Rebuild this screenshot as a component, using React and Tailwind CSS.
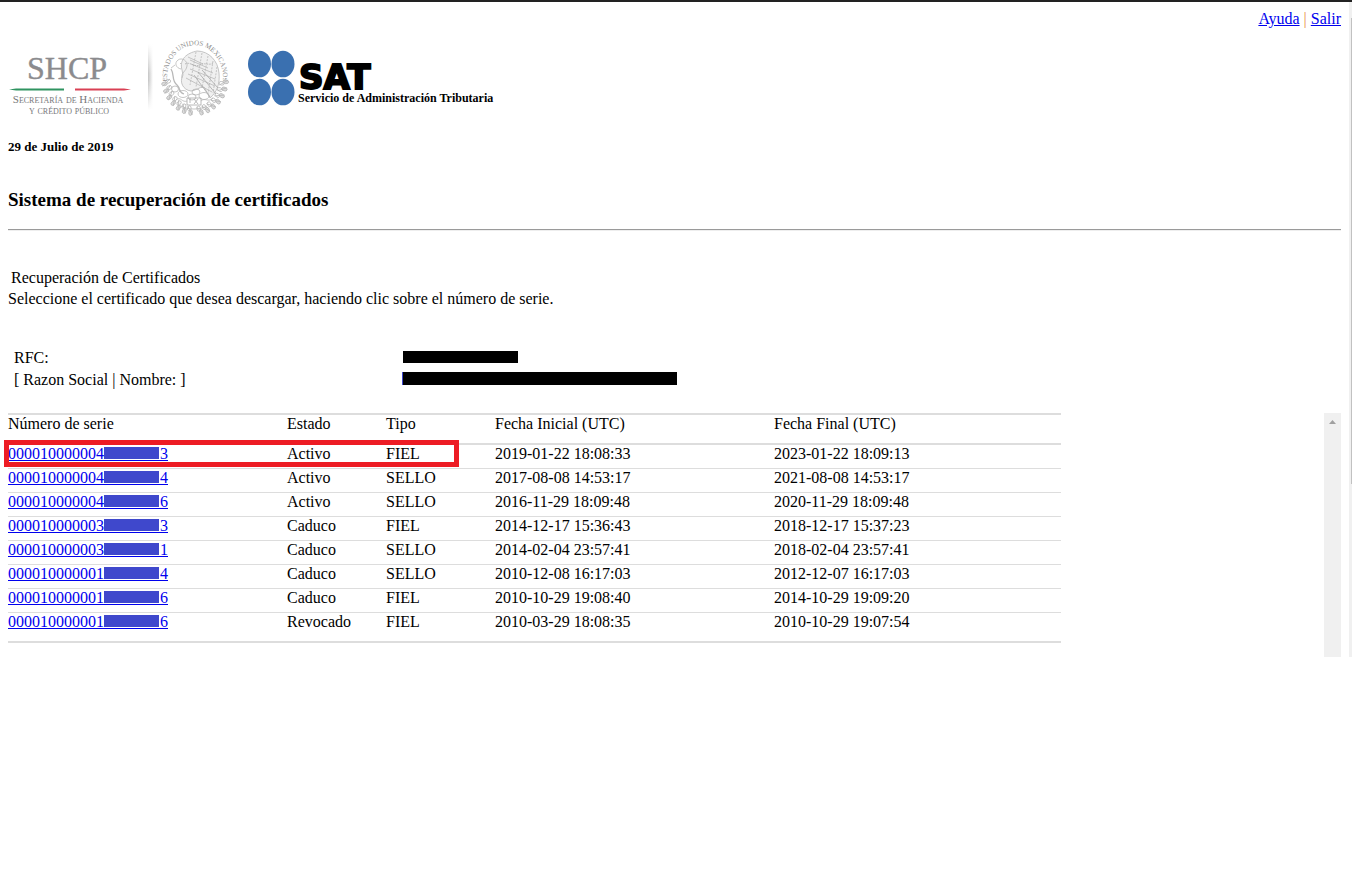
import clsx from 'clsx';

const certificates = [
  { start: '000010000004', end: '3', status: 'Activo', type: 'FIEL', from: '2019-01-22 18:08:33', to: '2023-01-22 18:09:13', marked: true },
  { start: '000010000004', end: '4', status: 'Activo', type: 'SELLO', from: '2017-08-08 14:53:17', to: '2021-08-08 14:53:17' },
  { start: '000010000004', end: '6', status: 'Activo', type: 'SELLO', from: '2016-11-29 18:09:48', to: '2020-11-29 18:09:48' },
  { start: '000010000003', end: '3', status: 'Caduco', type: 'FIEL', from: '2014-12-17 15:36:43', to: '2018-12-17 15:37:23' },
  { start: '000010000003', end: '1', status: 'Caduco', type: 'SELLO', from: '2014-02-04 23:57:41', to: '2018-02-04 23:57:41' },
  { start: '000010000001', end: '4', status: 'Caduco', type: 'SELLO', from: '2010-12-08 16:17:03', to: '2012-12-07 16:17:03' },
  { start: '000010000001', end: '6', status: 'Caduco', type: 'FIEL', from: '2010-10-29 19:08:40', to: '2014-10-29 19:09:20' },
  { start: '000010000001', end: '6', status: 'Revocado', type: 'FIEL', from: '2010-03-29 18:08:35', to: '2010-10-29 19:07:54' },
];

const columns = ['Número de serie', 'Estado', 'Tipo', 'Fecha Inicial (UTC)', 'Fecha Final (UTC)'];

// Leaves of the wreath, in degrees round the lower half of the seal
const leaves = [8, 20, 32, 44, 56, 68, 80, 100, 112, 124, 136, 148, 160, 172];

// Blank space under the hidden digits, keeps the underline unbroken
const hiddenDigits = '\u00a0'.repeat(14);

function NationalSeal() {
  return (
    <g transform="translate(187 42)" fill="none" stroke="#b8b8b8" strokeWidth="0.8">
      <path id="seal-ring" d="M-28 4 V0 A28 33 0 0 1 28 0 V4" stroke="none" />
      <text fill="#8c8c8c" stroke="none" className="font-['Liberation_Serif'] text-[7px]">
        <textPath href="#seal-ring" startOffset="50%" textAnchor="middle">ESTADOS UNIDOS MEXICANOS</textPath>
      </text>
      {leaves.map((deg) => {
        const a = (deg * Math.PI) / 180;
        const x = 29 * Math.cos(a);
        const y = 33 * Math.sin(a);
        return (
          <g key={deg} transform={`translate(${x} ${y}) rotate(${deg})`}>
            <ellipse cx="-2" cy="1" rx="2.6" ry="1.8" />
            <ellipse cx="2" cy="-1" rx="2.8" ry="1.8" fill="#dcdcdc" />
            <path d="M-4 3 L4 -3" />
          </g>
        );
      })}
      {/* Eagle: back, head and wing */}
      <path d="M-13 -8 C-16 -19 -8 -25 2 -27 C14 -27 23 -17 24 -5 C25 6 22 14 15 20 L9 9 C4 9 0 13 -4 13 C-12 12 -16 4 -12 -3 Z" fill="#f0f0f0" />
      <path d="M-14 -9 C-19 -10 -21 -15 -17 -18 C-13 -21 -7 -17 -8 -12 C-9 -6 -14 -6 -13 0" />
      <path d="M-20 -13 L-24 -10 M-15 -15 L-14 -14" />
      <path d="M-24 -9 C-20 -3 -24 2 -18 7 C-14 11 -17 14 -11 16" strokeWidth="1.3" />
      <path d="M-7 -21 L8 -14 M-5 -18 L13 -10 M-4 -14 L18 -5 M-5 -9 L20 1 M-7 -4 L20 8 M-9 0 L17 14" />
      <path d="M1 -26 L-5 7 M7 -25 L1 9 M13 -22 L7 10 M18 -17 L13 16 M22 -11 L18 15" strokeDasharray="2 1.2" />
      <path d="M3 -6 L21 16 M-1 -3 L15 19 M7 -8 L23 10" stroke="#a8a8a8" />
      <path d="M-10 -14 C-5 -17 -1 -10 5 -13 C9 -16 15 -12 18 -15" strokeDasharray="1.5 1" stroke="#a8a8a8" />
      {/* Nopal, rock and water */}
      <ellipse cx="-12" cy="16" rx="5" ry="3.5" />
      <ellipse cx="-20" cy="11" rx="3.5" ry="3" />
      <ellipse cx="9" cy="18" rx="5" ry="3.5" />
      <ellipse cx="1" cy="14" rx="4" ry="3" />
      <ellipse cx="-3" cy="19" rx="4" ry="3" />
      <path d="M-8 20 H6 V27 H-8 Z M-5 20 V25 M-1 21 L3 26 M3 21 L-1 26" stroke="#a8a8a8" />
      <path d="M-19 22 C-14 18 -13 25 -8 23 M6 23 C10 19 13 25 18 20 M-14 28 C-7 32 5 32 12 28" />
    </g>
  );
}

function ShcpLogo() {
  return (
    <svg width="224" height="86" viewBox="0 0 224 86" role="img" aria-label="SHCP">
      <defs>
        <linearGradient id="divider" x1="0" x2="1" y1="0" y2="0">
          <stop offset="0" stopColor="#c4c4c4" />
          <stop offset="1" stopColor="#fff" />
        </linearGradient>
        <linearGradient id="divider-fade" x1="0" x2="0" y1="0" y2="1">
          <stop offset="0" stopColor="#fff" />
          <stop offset="0.45" stopColor="#fff" stopOpacity="0" />
          <stop offset="0.55" stopColor="#fff" stopOpacity="0" />
          <stop offset="1" stopColor="#fff" />
        </linearGradient>
      </defs>
      <text x="59" y="43" textAnchor="middle" fill="#8b8b8e" stroke="#8b8b8e" strokeWidth="0.4" className="font-['Liberation_Serif'] text-[32px]">SHCP</text>
      <path d="M1 53.5 L8 52.5 H56 V54.5 H8 Z" fill="#2f9461" />
      <path d="M67 52.5 H116 L123 53.5 L116 54.5 H67 Z" fill="#d94054" />
      <g fill="#77777a" textAnchor="middle" className="font-['Liberation_Serif'] text-[11px] [font-variant-caps:small-caps]">
        <text x="60" y="67">Secretaría de Hacienda</text>
        <text x="61" y="78">y crédito público</text>
      </g>
      <rect x="140" y="8" width="5" height="66" fill="url(#divider)" />
      <rect x="140" y="8" width="5" height="66" fill="url(#divider-fade)" />
      <NationalSeal />
    </svg>
  );
}

function SatLogo() {
  return (
    <svg width="250" height="86" viewBox="0 0 250 86" role="img" aria-label="SAT">
      <g fill="#3a70b0">
        <ellipse cx="11.5" cy="28" rx="11.5" ry="13.3" />
        <ellipse cx="35" cy="28" rx="11.5" ry="13.3" />
        <ellipse cx="11.5" cy="56" rx="11.5" ry="13.3" />
        <ellipse cx="35" cy="56" rx="11.5" ry="13.3" />
      </g>
      <text x="51" y="53" stroke="#000" strokeWidth="2" className="font-['DejaVu_Sans'] text-[34px] font-bold">SAT</text>
      <text x="50" y="66" className="font-['Liberation_Serif'] text-[12px] font-bold">Servicio de Administración Tributaria</text>
    </svg>
  );
}

function SerialLink({ cert }) {
  return (
    <a href="#descargar" className="relative text-[#0000ee] underline">
      {cert.start}{hiddenDigits}{cert.end}
      <span className="absolute left-24 top-0.5 h-3 w-[55px] bg-[#3f48cc]" />
    </a>
  );
}

function CertificatesTable() {
  return (
    <table className="w-4/5 table-fixed border-collapse text-left">
      <colgroup>
        <col className="w-[279px]" />
        <col className="w-[99px]" />
        <col className="w-[109px]" />
        <col className="w-[279px]" />
        <col />
      </colgroup>
      <thead>
        <tr className="h-[30px] border-y-2 border-[#dddddd] align-top">
          {columns.map((name) => (
            <th key={name} scope="col" className="font-normal leading-[18px]">{name}</th>
          ))}
        </tr>
      </thead>
      <tbody>
        {certificates.map((cert, i) => (
          <tr
            key={cert.from}
            className={clsx(
              'border-[#dddddd] align-top leading-[18px]',
              i === certificates.length - 1 ? 'h-[30px] border-b-2' : 'h-6 border-b'
            )}
          >
            <td className="relative">
              <SerialLink cert={cert} />
              {cert.marked && (
                <div className="pointer-events-none absolute -left-1 -top-[5px] h-[27px] w-[455px] border-5 border-[#ed1c24]" />
              )}
            </td>
            <td>{cert.status}</td>
            <td>{cert.type}</td>
            <td>{cert.from}</td>
            <td>{cert.to}</td>
          </tr>
        ))}
      </tbody>
    </table>
  );
}

function App() {
  return (
    <div className="flex border-t-2 border-[#222] bg-white font-['Liberation_Serif',serif] text-base text-black">
      <main className="min-w-0 flex-1 px-2 pt-2">
        <nav className="flex justify-end gap-1 leading-[18px]">
          <a href="#ayuda" className="text-[#0000ee] underline">Ayuda</a>
          <span className="text-[#e89048]">|</span>
          <a href="#salir" className="text-[#0000ee] underline">Salir</a>
        </nav>

        <header className="mt-2 flex gap-4">
          <ShcpLogo />
          <SatLogo />
        </header>

        <h5 className="mt-4 text-[13px] font-bold leading-[18px]">29 de Julio de 2019</h5>
        <h3 className="mt-8 text-[19px] font-bold leading-6">Sistema de recuperación de certificados</h3>
        <hr className="mt-[17px] border-t border-b border-t-[#9a9a9a] border-b-[#eeeeee]" />

        <p className="mt-9 pl-[3px] leading-[22px]">Recuperación de Certificados</p>
        <p className="leading-5">Seleccione el certificado que desea descargar, haciendo clic sobre el número de serie.</p>

        <dl className="mt-[38px] grid grid-cols-[388px_1fr] items-center pl-1.5 leading-[22px]">
          <dt>RFC:</dt>
          <dd className="pb-0.5"><div className="ml-px h-3 w-[115px] bg-black" /></dd>
          <dt>[ Razon Social | Nombre: ]</dt>
          <dd className="pb-[3px]"><div className="h-[13px] w-[275px] border-l border-[#3f48cc] bg-black" /></dd>
        </dl>

        <div className="mt-[22px] flex h-[244px]">
          <div className="min-w-0 flex-1">
            <CertificatesTable />
          </div>
          <div className="flex w-[17px] justify-center bg-[#f0f0f0] pt-[7px]">
            <svg width="7" height="4" viewBox="0 0 7 4" aria-hidden="true">
              <path d="M0 4 L3.5 0 L7 4 Z" fill="#a0a0a0" />
            </svg>
          </div>
        </div>
      </main>
      <div className="flex w-[3px] justify-end bg-[#f0f0f0] pt-4">
        <div className="h-[466px] w-px bg-[#c1c1c1]" />
      </div>
    </div>
  );
}

export default App;
